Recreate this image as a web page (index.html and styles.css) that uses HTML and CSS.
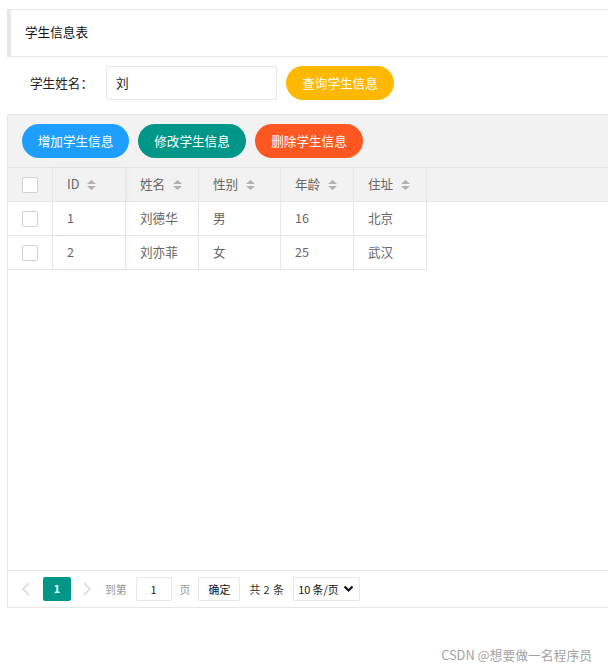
FILE: index.html
```html
<!DOCTYPE html>
<html>
<head>
<meta charset="utf-8" />
<title>学生信息表</title>
<link rel="stylesheet" href="styles.css">
</head>
<body>
	<div class="page">
		<blockquote class="quote">学生信息表</blockquote>

		<div class="search">
			<label class="search-label">学生姓名：</label>
			<input class="search-input" type="text" value="刘">
			<button class="btn btn-radius btn-warm" type="button">查询学生信息</button>
		</div>

		<div class="grid">
			<div class="toolbar">
				<button class="btn btn-radius btn-normal" type="button">增加学生信息</button>
				<button class="btn btn-radius btn-teal" type="button">修改学生信息</button>
				<button class="btn btn-radius btn-danger" type="button">删除学生信息</button>
			</div>

			<div class="grid-main">
				<div class="grid-head">
					<div class="row">
						<div class="cell col-check"><span class="checkbox"></span></div>
						<div class="cell col-id">ID <svg class="sort" width="9" height="10" viewBox="0 0 9 10"><path d="M0 4L4.5 0L9 4Z M0 6L4.5 10L9 6Z" fill="#b2b2b2"/></svg></div>
						<div class="cell col-name">姓名 <svg class="sort" width="9" height="10" viewBox="0 0 9 10"><path d="M0 4L4.5 0L9 4Z M0 6L4.5 10L9 6Z" fill="#b2b2b2"/></svg></div>
						<div class="cell col-sex">性别 <svg class="sort" width="9" height="10" viewBox="0 0 9 10"><path d="M0 4L4.5 0L9 4Z M0 6L4.5 10L9 6Z" fill="#b2b2b2"/></svg></div>
						<div class="cell col-age">年龄 <svg class="sort" width="9" height="10" viewBox="0 0 9 10"><path d="M0 4L4.5 0L9 4Z M0 6L4.5 10L9 6Z" fill="#b2b2b2"/></svg></div>
						<div class="cell col-addr">住址 <svg class="sort" width="9" height="10" viewBox="0 0 9 10"><path d="M0 4L4.5 0L9 4Z M0 6L4.5 10L9 6Z" fill="#b2b2b2"/></svg></div>
					</div>
				</div>
				<div class="grid-body">
					<div class="row">
						<div class="cell col-check"><span class="checkbox"></span></div>
						<div class="cell col-id">1</div>
						<div class="cell col-name">刘德华</div>
						<div class="cell col-sex">男</div>
						<div class="cell col-age">16</div>
						<div class="cell col-addr">北京</div>
					</div>
					<div class="row">
						<div class="cell col-check"><span class="checkbox"></span></div>
						<div class="cell col-id">2</div>
						<div class="cell col-name">刘亦菲</div>
						<div class="cell col-sex">女</div>
						<div class="cell col-age">25</div>
						<div class="cell col-addr">武汉</div>
					</div>
				</div>
			</div>

			<div class="pager">
				<span class="pager-prev"><svg width="8" height="14" viewBox="0 0 8 14"><path d="M7 1L1 7L7 13" fill="none" stroke="#d2d2d2" stroke-width="1.2"/></svg></span>
				<span class="pager-curr">1</span>
				<span class="pager-next"><svg width="8" height="14" viewBox="0 0 8 14"><path d="M1 1L7 7L1 13" fill="none" stroke="#d2d2d2" stroke-width="1.2"/></svg></span>
				<span class="pager-skip">到第</span>
				<input class="pager-input" type="text" value="1">
				<span class="pager-skip">页</span>
				<button class="pager-btn" type="button">确定</button>
				<span class="pager-count">共 2 条</span>
				<span class="pager-limits">10 条/页 <svg width="11" height="8" viewBox="0 0 11 8"><path d="M1.5 1.5L5.5 5.5L9.5 1.5" fill="none" stroke="#111" stroke-width="2.2"/></svg></span>
			</div>
		</div>
	</div>

	<div class="mark">CSDN @想要做一名程序员</div>
</body>
</html>
```

FILE: styles.css
```css
html, body {
	margin: 0;
	padding: 0;
	overflow: hidden;
	background: #fff;
}
body {
	font-family: "Microsoft YaHei", "Noto Sans CJK SC", "Noto Sans", sans-serif;
	font-size: 12.6px;
	color: #333;
	height: 670px;
	position: relative;
}
.page {
	padding: 9px 0 0 7px;
	margin-right: -20px;
}

/* quote */
.quote {
	margin: 0;
	box-sizing: border-box;
	height: 48px;
	line-height: 44px;
	padding: 0 0 2px 14px;
	border: 1px solid #e6e6e6;
	border-left: 4px solid #e6e6e6;
	color: #111;
}

/* search form */
.search {
	display: flex;
	align-items: center;
	margin-top: 9px;
	height: 34px;
}
.search-label {
	width: 76px;
	padding-left: 23px;
	padding-bottom: 2px;
	color: #222;
}
.search-input {
	box-sizing: border-box;
	width: 171px;
	height: 34px;
	border: 1px solid #e6e6e6;
	border-radius: 2px;
	padding: 0 9px 2px;
	font: inherit;
	color: #222;
	outline: none;
}
.search .btn {
	margin-left: 9px;
}

/* buttons */
.btn {
	box-sizing: border-box;
	height: 34px;
	width: 108px;
	border: 0;
	padding: 0 0 2px;
	font: inherit;
	color: #fff;
	cursor: pointer;
}
.btn-radius {
	border-radius: 100px;
}
.btn-warm { background: #ffb800; }
.btn-normal { background: #1e9fff; }
.btn-teal { background: #009688; }
.btn-danger { background: #ff5722; }

/* table */
.grid {
	margin-top: 14px;
	border: 1px solid #e6e6e6;
}
.toolbar {
	display: flex;
	gap: 9px;
	height: 53px;
	box-sizing: border-box;
	padding: 9px 14px;
	background: #f2f2f2;
	border-bottom: 1px solid #e6e6e6;
}
.toolbar .btn:first-child {
	width: 107px;
}
.grid-main {
	height: 402px;
}
.grid-head {
	background: #f2f2f2;
	border-bottom: 1px solid #e6e6e6;
}
.row {
	display: flex;
	height: 33px;
}
.grid-body .row {
	width: 419px;
	border-bottom: 1px solid #e6e6e6;
}
.cell {
	box-sizing: border-box;
	display: flex;
	align-items: center;
	padding: 0 0 2px 14px;
	border-right: 1px solid #e6e6e6;
	color: #666;
	white-space: nowrap;
}
.col-check { width: 45px; padding: 0; justify-content: center; }
.col-id { width: 73px; position: relative; box-shadow: 2px 0 5px rgba(0,0,0,.04); }
.col-name { width: 73px; }
.col-sex { width: 82px; }
.col-age { width: 73px; }
.col-addr { width: 73px; }

.sort {
	margin: 2px 0 0 8px;
}
.checkbox {
	box-sizing: border-box;
	width: 16px;
	height: 16px;
	border: 1px solid #d2d2d2;
	border-radius: 2px;
	background: #fff;
}

/* pager */
.pager {
	display: flex;
	align-items: center;
	height: 37px;
	box-sizing: border-box;
	padding: 0 0 0 14px;
	border-top: 1px solid #e6e6e6;
	font-size: 10.8px;
	color: #333;
	white-space: nowrap;
}
.pager-prev,
.pager-next {
	display: flex;
	align-items: center;
}
.pager-prev {
	margin-right: 13px;
}
.pager-next {
	margin: 0 14px 0 12px;
}
.pager-curr {
	width: 28px;
	height: 24px;
	line-height: 23px;
	text-align: center;
	background: #009688;
	color: #fff;
	border-radius: 2px;
	font-weight: bold;
}
.pager-skip {
	color: #999;
	margin-top: -1px;
}
.pager-input {
	box-sizing: border-box;
	width: 36px;
	height: 24px;
	margin: 0 8px 0 9px;
	border: 1px solid #e6e6e6;
	border-radius: 2px;
	text-align: center;
	font: inherit;
	color: #222;
	outline: none;
	padding: 0 0 1px;
}
.pager-btn {
	box-sizing: border-box;
	width: 42px;
	height: 24px;
	margin-left: 8px;
	border: 1px solid #e6e6e6;
	border-radius: 2px;
	background: #fff;
	font: inherit;
	color: #111;
	padding: 0 0 1px;
}
.pager-count {
	margin: -1px 0 0 9px;
	color: #333;
	word-spacing: 1px;
}
.pager-limits {
	box-sizing: border-box;
	display: flex;
	align-items: center;
	justify-content: center;
	gap: 5px;
	height: 24px;
	width: 67px;
	margin-left: 9px;
	border: 1px solid #e6e6e6;
	border-radius: 2px;
	color: #111;
}

/* watermark */
.mark {
	position: absolute;
	right: 16px;
	top: 645px;
	font-size: 12.8px;
	color: #a3a3a3;
}
```
